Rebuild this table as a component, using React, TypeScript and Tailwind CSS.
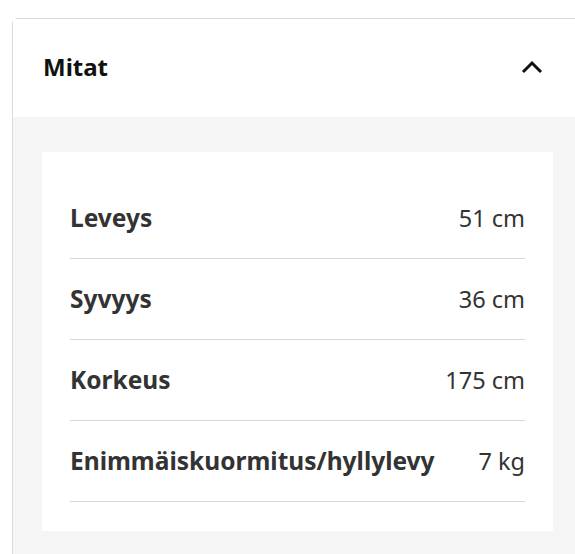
const rows = [
  { label: "Leveys", value: "51 cm" },
  { label: "Syvyys", value: "36 cm" },
  { label: "Korkeus", value: "175 cm" },
  { label: "Enimmäiskuormitus/hyllylevy", value: "7 kg" },
];

function ChevronUp() {
  return (
    <svg width="22" height="14" viewBox="0 0 22 14" fill="none">
      <polyline
        points="2,12 11,3 20,12"
        stroke="#111111"
        strokeWidth="3"
        strokeLinecap="butt"
        strokeLinejoin="miter"
      />
    </svg>
  );
}

export default function App() {
  return (
    <div className="h-[554px] w-[575px] overflow-hidden bg-white pl-[12px] pt-[18px] font-['Noto_Sans',sans-serif]">
      <div className="w-[600px] rounded-tl-[6px] border border-[#d9d9d9]">
        <div className="flex h-[98px] items-center justify-between bg-white pb-[2px] pl-[30px] pr-[68px]">
          <span className="text-[24px] font-bold leading-none text-[#111111]">
            Mitat
          </span>
          <ChevronUp />
        </div>
        <div className="h-[500px] bg-[#f5f5f5] pl-[29px] pt-[35px]">
          <div className="w-[511px] bg-white px-[28px] pb-[29px] pt-[26px]">
            {rows.map((r) => (
              <div
                key={r.label}
                className="flex h-[81px] items-center justify-between border-b border-[#d8d8d8] pt-[1px] leading-none text-[#333333]"
              >
                <span className="text-[24.5px] font-bold">{r.label}</span>
                <span className="text-[23.5px]">{r.value}</span>
              </div>
            ))}
          </div>
        </div>
      </div>
    </div>
  );
}
